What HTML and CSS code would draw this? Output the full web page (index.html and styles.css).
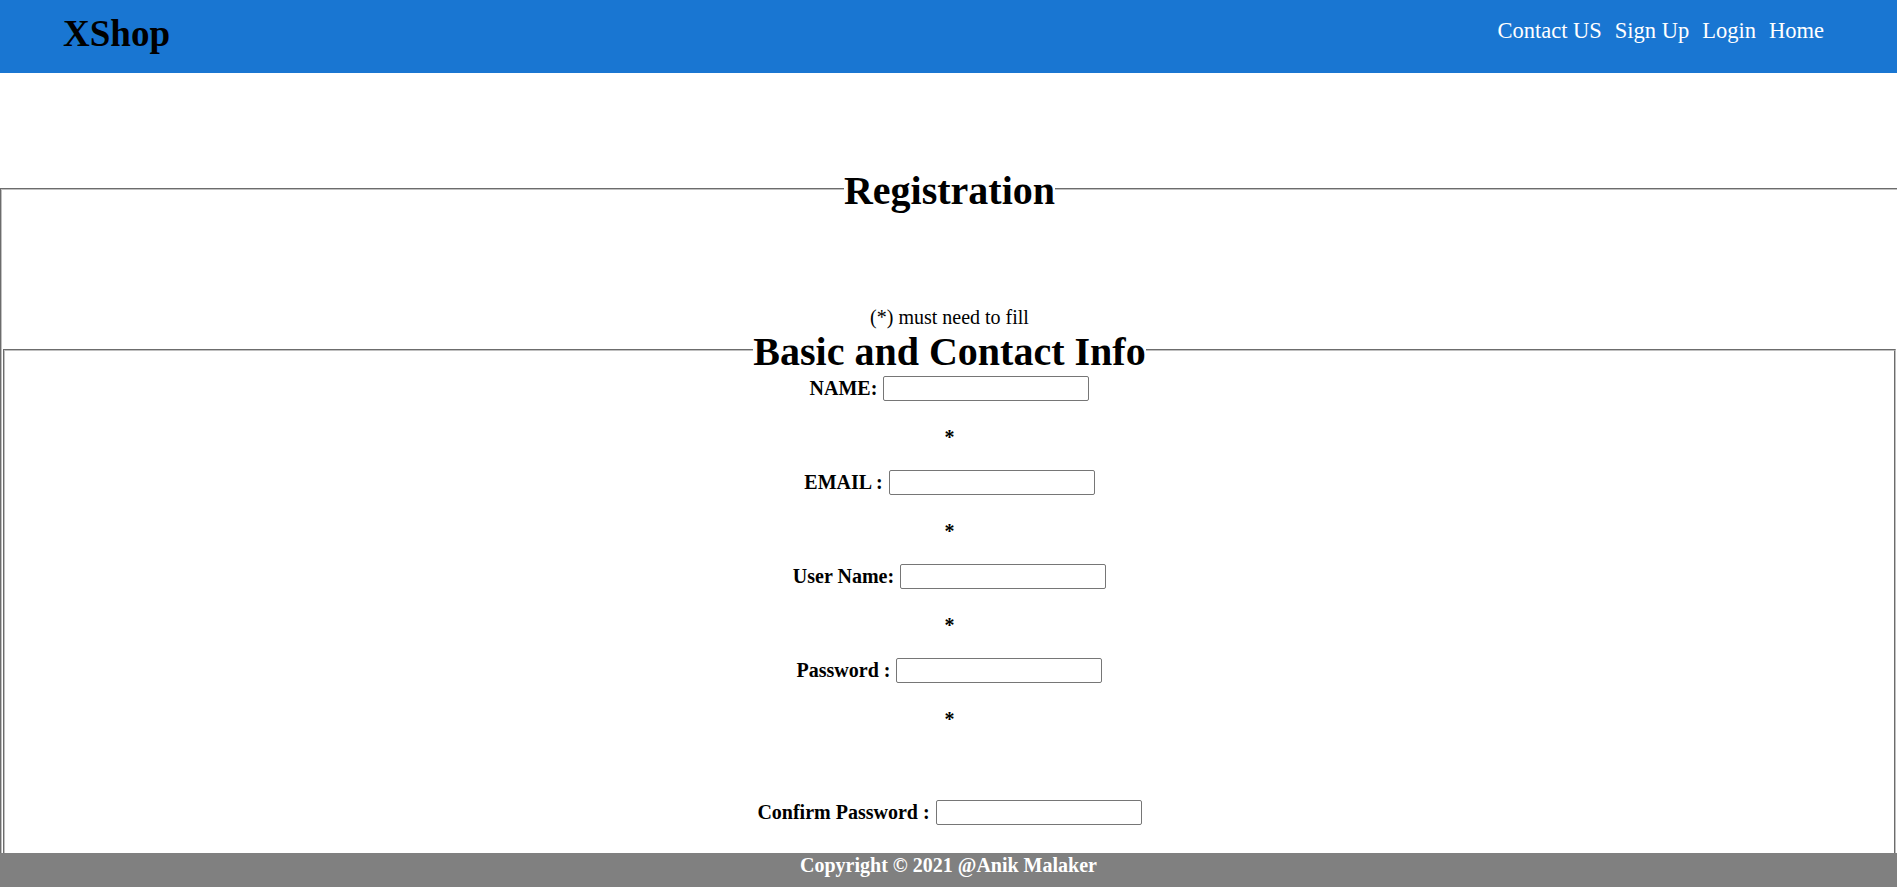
FILE: index.html
```html
<!DOCTYPE html>
<html lang="en">
<head>
<meta charset="utf-8">
<title>XShop - Registration</title>
<link rel="stylesheet" href="styles.css">
</head>
<body>
<header class="topbar">
  <div class="brand">XShop</div>
  <nav class="menu">
    <a href="#">Contact US</a>
    <a href="#">Sign Up</a>
    <a href="#">Login</a>
    <a href="#">Home</a>
  </nav>
</header>
<main class="page">
  <form class="reg">
    <fieldset class="outer">
      <legend class="legend"><h1 class="legend-title">Registration</h1></legend>
      <p class="note">(*) must need to fill</p>
      <fieldset class="inner">
        <legend class="legend"><h1 class="legend-title">Basic and Contact Info</h1></legend>
        <div class="field"><label>NAME:</label><input type="text"></div>
        <p class="req">*</p>
        <div class="field"><label>EMAIL :</label><input type="text"></div>
        <p class="req">*</p>
        <div class="field"><label>User Name:</label><input type="text"></div>
        <p class="req">*</p>
        <div class="field"><label>Password :</label><input type="password"></div>
        <p class="req req-gap">*</p>
        <div class="field"><label>Confirm Password :</label><input type="password"></div>
      </fieldset>
    </fieldset>
  </form>
</main>
<footer class="footer">Copyright © 2021 @Anik Malaker</footer>
</body>
</html>
```
FILE: styles.css
```css
html {
  overflow: hidden;
}
html, body {
  margin: 0;
  padding: 0;
}
body {
  font-family: "Liberation Serif", "Times New Roman", serif;
  font-size: 20px;
  color: #000;
  background: #fff;
}

.topbar {
  height: 73px;
  background: #1976d2;
  display: flex;
  justify-content: space-between;
  align-items: flex-start;
  padding: 0 73px 0 63px;
}
.brand {
  font-size: 37px;
  font-weight: bold;
  line-height: 42px;
  padding-top: 13px;
}
.menu {
  display: flex;
  gap: 13px;
  padding-top: 18px;
  font-size: 22.5px;
  line-height: 26px;
}
.menu a {
  color: #fff;
  text-decoration: none;
}

.page {
  padding-top: 93px;
}
.reg {
  margin: 0;
}
.outer {
  margin: 0;
  padding: 0 1px;
  border: 2px groove rgb(192, 192, 192);
  width: 1893px;
  min-width: 0;
}
.legend {
  margin-left: auto;
  margin-right: auto;
  padding: 0;
}
.legend-title {
  margin: 0;
  padding-top: 3px;
  font-size: 40px;
  line-height: 43px;
  font-weight: bold;
}
.note {
  margin: 92px 0 0;
  padding-top: 3px;
  text-align: center;
  line-height: 20px;
}
.inner {
  margin: 0;
  padding: 3px 0 120px;
  border: 2px groove rgb(192, 192, 192);
  min-width: 0;
  text-align: center;
}
.field {
  height: 25px;
  display: flex;
  justify-content: center;
  align-items: center;
  gap: 6px;
  font-weight: bold;
}
.field label {
  line-height: 23px;
  margin-bottom: 1px;
}
.field input {
  width: 206px;
  height: 25px;
  box-sizing: border-box;
  margin: 0;
  padding: 1px 2px;
  border: 1px solid #767676;
  border-radius: 2px;
  background: #fff;
}
.req {
  margin: 25px 0 21px;
  line-height: 23px;
  font-weight: bold;
}
.req-gap {
  margin-bottom: 69px;
}

.footer {
  position: fixed;
  left: 0;
  right: 0;
  bottom: 0;
  height: 34px;
  box-sizing: border-box;
  padding-top: 1px;
  background: #808080;
  color: #fff;
  font-weight: bold;
  text-align: center;
  line-height: 23px;
}
```
